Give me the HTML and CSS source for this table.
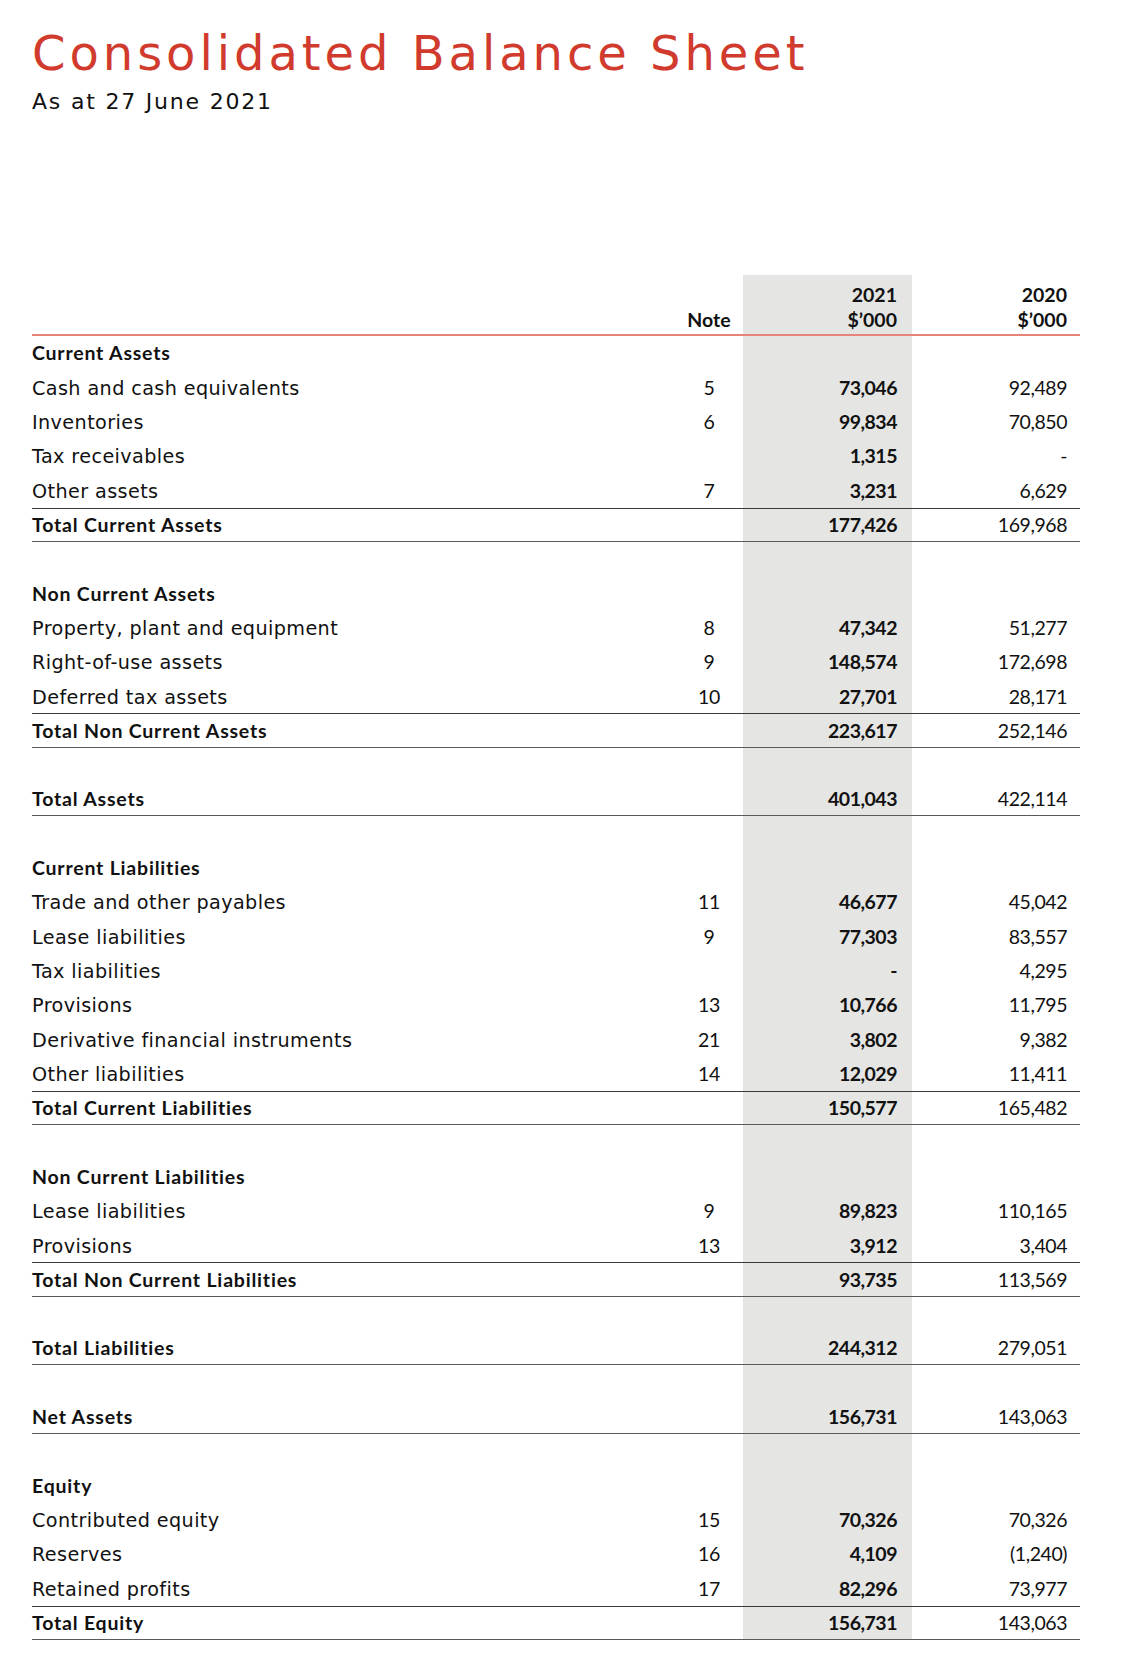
FILE: index.html
```html
<!DOCTYPE html>
<html lang="en">
<head>
<meta charset="utf-8">
<title>Consolidated Balance Sheet</title>
<link rel="stylesheet" href="styles.css">
</head>
<body>
<div class="page">
  <h1 class="title">Consolidated Balance Sheet</h1>
  <p class="subtitle">As at 27 June 2021</p>

  <div class="sheet">
    <div class="row head">
      <div class="c-label"></div>
      <div class="c-note">Note</div>
      <div class="c-cur">2021<br>$’000</div>
      <div class="c-prev">2020<br>$’000</div>
    </div>

    <div class="row section"><div class="c-label">Current Assets</div><div class="c-note"></div><div class="c-cur"></div><div class="c-prev"></div></div>
    <div class="row"><div class="c-label">Cash and cash equivalents</div><div class="c-note">5</div><div class="c-cur">73,046</div><div class="c-prev">92,489</div></div>
    <div class="row"><div class="c-label">Inventories</div><div class="c-note">6</div><div class="c-cur">99,834</div><div class="c-prev">70,850</div></div>
    <div class="row"><div class="c-label">Tax receivables</div><div class="c-note"></div><div class="c-cur">1,315</div><div class="c-prev">-</div></div>
    <div class="row"><div class="c-label">Other assets</div><div class="c-note">7</div><div class="c-cur">3,231</div><div class="c-prev">6,629</div></div>
    <div class="row total"><div class="c-label">Total Current Assets</div><div class="c-note"></div><div class="c-cur">177,426</div><div class="c-prev">169,968</div></div>
    <div class="row"><div class="c-label"></div><div class="c-note"></div><div class="c-cur"></div><div class="c-prev"></div></div>

    <div class="row section"><div class="c-label">Non Current Assets</div><div class="c-note"></div><div class="c-cur"></div><div class="c-prev"></div></div>
    <div class="row"><div class="c-label">Property, plant and equipment</div><div class="c-note">8</div><div class="c-cur">47,342</div><div class="c-prev">51,277</div></div>
    <div class="row"><div class="c-label">Right-of-use assets</div><div class="c-note">9</div><div class="c-cur">148,574</div><div class="c-prev">172,698</div></div>
    <div class="row"><div class="c-label">Deferred tax assets</div><div class="c-note">10</div><div class="c-cur">27,701</div><div class="c-prev">28,171</div></div>
    <div class="row total"><div class="c-label">Total Non Current Assets</div><div class="c-note"></div><div class="c-cur">223,617</div><div class="c-prev">252,146</div></div>
    <div class="row"><div class="c-label"></div><div class="c-note"></div><div class="c-cur"></div><div class="c-prev"></div></div>

    <div class="row grand"><div class="c-label">Total Assets</div><div class="c-note"></div><div class="c-cur">401,043</div><div class="c-prev">422,114</div></div>
    <div class="row"><div class="c-label"></div><div class="c-note"></div><div class="c-cur"></div><div class="c-prev"></div></div>

    <div class="row section"><div class="c-label">Current Liabilities</div><div class="c-note"></div><div class="c-cur"></div><div class="c-prev"></div></div>
    <div class="row"><div class="c-label">Trade and other payables</div><div class="c-note">11</div><div class="c-cur">46,677</div><div class="c-prev">45,042</div></div>
    <div class="row"><div class="c-label">Lease liabilities</div><div class="c-note">9</div><div class="c-cur">77,303</div><div class="c-prev">83,557</div></div>
    <div class="row"><div class="c-label">Tax liabilities</div><div class="c-note"></div><div class="c-cur">-</div><div class="c-prev">4,295</div></div>
    <div class="row"><div class="c-label">Provisions</div><div class="c-note">13</div><div class="c-cur">10,766</div><div class="c-prev">11,795</div></div>
    <div class="row"><div class="c-label">Derivative financial instruments</div><div class="c-note">21</div><div class="c-cur">3,802</div><div class="c-prev">9,382</div></div>
    <div class="row"><div class="c-label">Other liabilities</div><div class="c-note">14</div><div class="c-cur">12,029</div><div class="c-prev">11,411</div></div>
    <div class="row total"><div class="c-label">Total Current Liabilities</div><div class="c-note"></div><div class="c-cur">150,577</div><div class="c-prev">165,482</div></div>
    <div class="row"><div class="c-label"></div><div class="c-note"></div><div class="c-cur"></div><div class="c-prev"></div></div>

    <div class="row section"><div class="c-label">Non Current Liabilities</div><div class="c-note"></div><div class="c-cur"></div><div class="c-prev"></div></div>
    <div class="row"><div class="c-label">Lease liabilities</div><div class="c-note">9</div><div class="c-cur">89,823</div><div class="c-prev">110,165</div></div>
    <div class="row"><div class="c-label">Provisions</div><div class="c-note">13</div><div class="c-cur">3,912</div><div class="c-prev">3,404</div></div>
    <div class="row total"><div class="c-label">Total Non Current Liabilities</div><div class="c-note"></div><div class="c-cur">93,735</div><div class="c-prev">113,569</div></div>
    <div class="row"><div class="c-label"></div><div class="c-note"></div><div class="c-cur"></div><div class="c-prev"></div></div>

    <div class="row grand"><div class="c-label">Total Liabilities</div><div class="c-note"></div><div class="c-cur">244,312</div><div class="c-prev">279,051</div></div>
    <div class="row"><div class="c-label"></div><div class="c-note"></div><div class="c-cur"></div><div class="c-prev"></div></div>

    <div class="row grand"><div class="c-label">Net Assets</div><div class="c-note"></div><div class="c-cur">156,731</div><div class="c-prev">143,063</div></div>
    <div class="row"><div class="c-label"></div><div class="c-note"></div><div class="c-cur"></div><div class="c-prev"></div></div>

    <div class="row section"><div class="c-label">Equity</div><div class="c-note"></div><div class="c-cur"></div><div class="c-prev"></div></div>
    <div class="row"><div class="c-label">Contributed equity</div><div class="c-note">15</div><div class="c-cur">70,326</div><div class="c-prev">70,326</div></div>
    <div class="row"><div class="c-label">Reserves</div><div class="c-note">16</div><div class="c-cur">4,109</div><div class="c-prev">(1,240)</div></div>
    <div class="row"><div class="c-label">Retained profits</div><div class="c-note">17</div><div class="c-cur">82,296</div><div class="c-prev">73,977</div></div>
    <div class="row total"><div class="c-label">Total Equity</div><div class="c-note"></div><div class="c-cur">156,731</div><div class="c-prev">143,063</div></div>
  </div>
</div>
</body>
</html>
```

FILE: styles.css
```css
* { box-sizing: border-box; }

html, body {
  margin: 0;
  padding: 0;
  background: #ffffff;
}

body {
  font-family: "Lato", "Liberation Sans", sans-serif;
  color: #111111;
}

.page {
  padding: 25.4px 54px 0 32px;
  width: 1134px;
}

.title {
  margin: 0;
  font-family: "DejaVu Sans", "Liberation Sans", sans-serif;
  font-size: 48px;
  line-height: 56px;
  font-weight: 400;
  color: #d13b2e;
  letter-spacing: 3.95px;
}

.subtitle {
  margin: 8px 0 0 0;
  font-family: "DejaVu Sans", "Liberation Sans", sans-serif;
  font-size: 22px;
  line-height: 26px;
  font-weight: 400;
  color: #111111;
  letter-spacing: 1.8px;
}

.sheet {
  margin-top: 159.6px;
  width: 1048px;
  font-size: 19.5px;
}

.row {
  display: grid;
  grid-template-columns: 1fr 68px 169px 168px;
  height: 34.32px;
  align-items: stretch;
}

.row > div {
  display: flex;
  align-items: center;
  line-height: 23.4px;
  white-space: nowrap;
}

.c-label {
  justify-content: flex-start;
  font-family: "DejaVu Sans", "Liberation Sans", sans-serif;
  font-size: 19.2px;
  letter-spacing: 0.4px;
  padding-top: 2px;
}
.c-note {
  justify-content: center;
  letter-spacing: -0.3px;
}
.c-cur {
  justify-content: flex-end;
  padding-right: 15px;
  background: #e5e5e4;
  font-weight: 700;
  letter-spacing: -0.5px;
}
.c-prev {
  justify-content: flex-end;
  padding-right: 13px;
  letter-spacing: -0.45px;
}

.row.head {
  height: 61px;
  border-bottom: 2px solid #e6837a;
  font-weight: 700;
}
.row.head > div {
  align-items: flex-start;
  text-align: right;
  line-height: 25px;
  padding-top: 6.6px;
  letter-spacing: 0;
}
.row.head .c-note {
  justify-content: center;
  padding-top: 31.6px;
}

.row.section .c-label,
.row.total .c-label,
.row.grand .c-label {
  font-family: "Lato", "Liberation Sans", sans-serif;
  font-size: 19.5px;
  font-weight: 700;
  letter-spacing: 0.8px;
  padding-top: 0;
}

.row.total {
  border-top: 1px solid #3a3a3a;
  border-bottom: 1px solid #5a5a5a;
}

.row.grand {
  border-bottom: 1px solid #5a5a5a;
}
```
